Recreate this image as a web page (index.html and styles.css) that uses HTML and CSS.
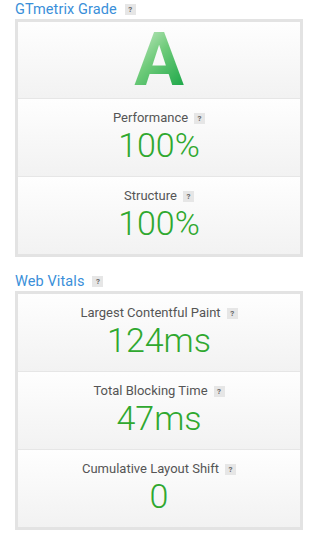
FILE: index.html
```html
<!DOCTYPE html>
<html lang="en">

<head>
    <link rel="stylesheet" href="styles.css">
</head>

<body>
    <main class="report">
        <div class="section-title">
            <h2>GTmetrix Grade</h2>
            <span class="help">?</span>
        </div>
        <div class="score-box">
            <div class="score-row grade-row">
                <span class="grade">A</span>
            </div>
            <div class="score-row">
                <div class="label"><span>Performance</span><span class="help">?</span></div>
                <div class="value">100%</div>
            </div>
            <div class="score-row">
                <div class="label"><span>Structure</span><span class="help">?</span></div>
                <div class="value">100%</div>
            </div>
        </div>

        <div class="section-title vitals">
            <h2>Web Vitals</h2>
            <span class="help">?</span>
        </div>
        <div class="score-box">
            <div class="score-row">
                <div class="label"><span>Largest Contentful Paint</span><span class="help">?</span></div>
                <div class="value">124ms</div>
            </div>
            <div class="score-row">
                <div class="label"><span>Total Blocking Time</span><span class="help">?</span></div>
                <div class="value">47ms</div>
            </div>
            <div class="score-row">
                <div class="label"><span>Cumulative Layout Shift</span><span class="help">?</span></div>
                <div class="value">0</div>
            </div>
        </div>
    </main>
</body>

</html>
```
FILE: styles.css
```css
body {
    margin: 0;
    background-color: #fff;
    font-family: Roboto, "DejaVu Sans", sans-serif;
}

.report {
    padding: 0 15px;
}

.section-title {
    height: 19px;
    display: flex;
    align-items: center;
}

.section-title h2 {
    margin: 0;
    font-size: 14.5px;
    line-height: 19px;
    font-weight: normal;
    letter-spacing: 0.1px;
    color: #3a8fd9;
}

.section-title.vitals {
    margin-top: 15px;
}

.help {
    display: inline-block;
    width: 11px;
    height: 11px;
    line-height: 11px;
    margin-left: 6px;
    background-color: #e6e6e6;
    color: #666;
    font-size: 8px;
    font-weight: bold;
    text-align: center;
}

.section-title .help {
    margin-left: 8px;
}

.score-box {
    border: 3px solid #e3e3e3;
}

.score-row {
    height: 78px;
    box-sizing: border-box;
    border-top: 1px solid #e6e6e6;
    background: linear-gradient(#fefefe, #f2f2f2);
    text-align: center;
    padding-top: 11px;
}

.score-row:first-child {
    border-top: none;
    height: 77px;
}

.grade-row {
    display: flex;
    align-items: center;
    justify-content: center;
    padding-top: 0;
    height: 76px !important;
}

.grade {
    font-size: 74px;
    line-height: 74px;
    font-weight: bold;
    background: linear-gradient(135deg, #c4e8c4 10%, #6fcb7a 45%, #1fa84a 90%);
    -webkit-background-clip: text;
    background-clip: text;
    color: transparent;
}

.label {
    display: flex;
    justify-content: center;
    align-items: center;
    height: 16px;
    font-size: 13px;
    line-height: 16px;
    color: #555;
}

.value {
    font-size: 34px;
    line-height: 38px;
    font-weight: 300;
    color: #2fa82f;
}
```
